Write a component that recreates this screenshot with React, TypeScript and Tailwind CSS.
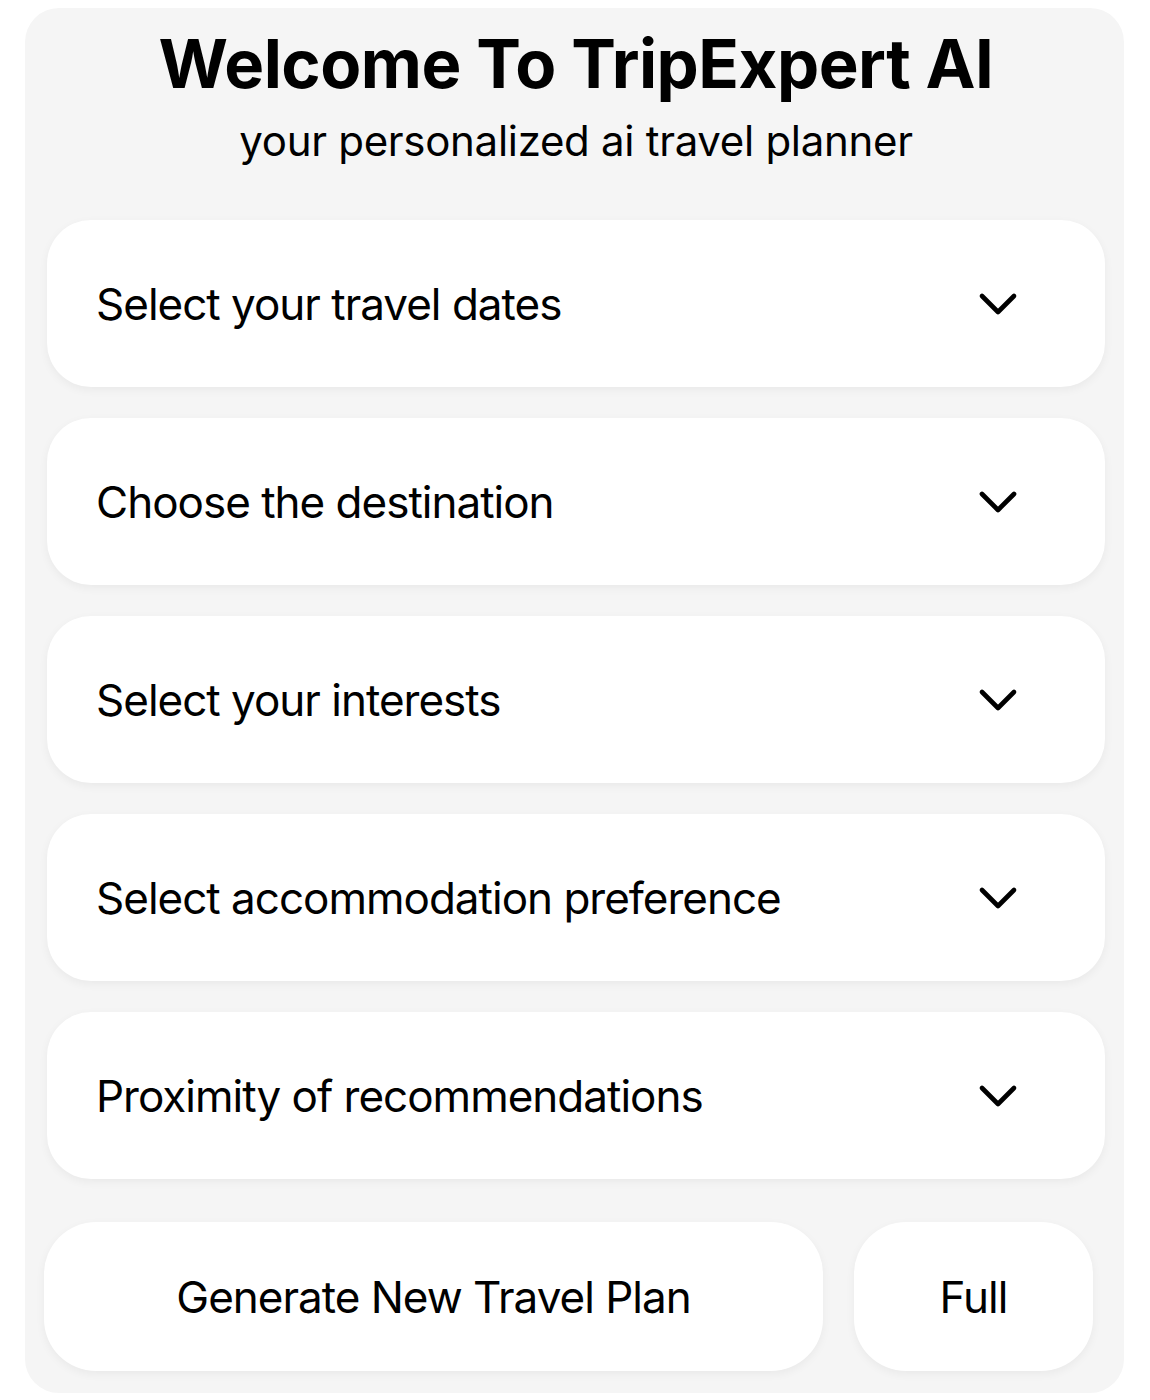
import { ChevronDown } from "lucide-react";

const options = [
  "Select your travel dates",
  "Choose the destination",
  "Select your interests",
  "Select accommodation preference",
  "Proximity of recommendations",
];

export default function App() {
  return (
    <div className="min-h-[1400px] bg-white pt-[8px] pl-[25px] font-['Inter',sans-serif] text-black">
      <div className="flex w-[1099px] flex-col rounded-[34px] bg-[#f5f5f5] pt-[18px] pr-[19px] pb-[22px] pl-[22px]">
        <h1 className="text-center text-[67px] leading-[76px] font-bold tracking-[-0.5px]">
          Welcome To TripExpert AI
        </h1>
        <p className="mt-[14px] text-center text-[42px] leading-[50px] tracking-[-0.3px]">
          your personalized ai travel planner
        </p>

        <div className="mt-[54px] flex flex-col gap-[31px]">
          {options.map((label) => (
            <div
              key={label}
              className="flex h-[167px] items-center justify-between rounded-[44px] bg-white pr-[75px] pl-[49px] shadow-[0_3px_10px_rgba(0,0,0,0.05)]"
            >
              <span className="text-[44px] tracking-[-1px]">{label}</span>
              <ChevronDown size={64} strokeWidth={1.75} />
            </div>
          ))}
        </div>

        <div className="mt-[43px] mr-[12px] ml-[-3px] flex gap-[31px]">
          <button className="flex h-[149px] flex-1 items-center justify-center rounded-[52px] bg-white text-[44px] tracking-[-1px] shadow-[0_3px_10px_rgba(0,0,0,0.05)]">
            Generate New Travel Plan
          </button>
          <button className="flex h-[149px] w-[239px] items-center justify-center rounded-[52px] bg-white text-[44px] tracking-[-1px] shadow-[0_3px_10px_rgba(0,0,0,0.05)]">
            Full
          </button>
        </div>
      </div>
    </div>
  );
}
